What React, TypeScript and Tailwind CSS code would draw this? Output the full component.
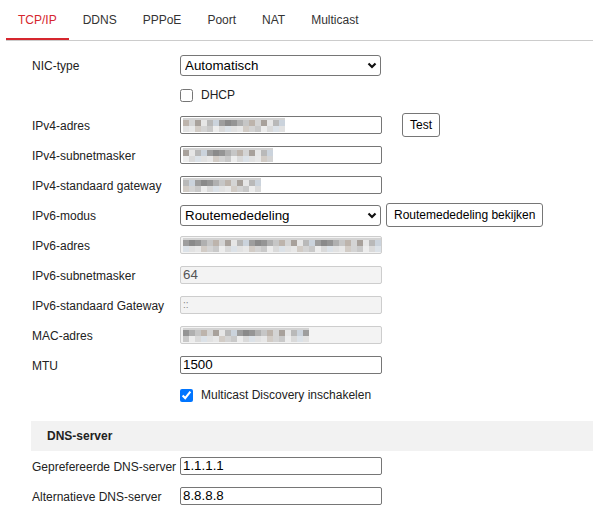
import { useState } from 'react'

const tabs = ['TCP/IP', 'DDNS', 'PPPoE', 'Poort', 'NAT', 'Multicast']

// pixel-blokjes voor de onherkenbaar gemaakte adressen
const donker = ['bg-[#b0b0b0]', 'bg-[#9e9e9e]', 'bg-[#e6e6e6]', 'bg-[#bdb4ac]', 'bg-[#959595]', 'bg-[#cbd3dc]', 'bg-[#a8a19b]', 'bg-[#c6c6c6]', 'bg-[#8a8a8a]', 'bg-[#b9b9b9]', 'bg-[#d4d4d4]']
const licht = ['bg-[#d4d4d4]', 'bg-[#e2e2e2]', 'bg-[#ededed]', 'bg-[#d2ccc6]', 'bg-[#dce2e8]', 'bg-[#c9c9c9]', 'bg-[#e8e8e8]', 'bg-[#dadada]']

function Mosaic({ width, seed }: { width: number; seed: number }) {
  const n = Math.round(width / 6)
  const cols = Array.from({ length: n }, (_, i) => i)
  return (
    <div className="flex flex-col">
      <div className="h-[2px] bg-[#d3d3d3]" style={{ width: n * 6 }} />
      <div className="flex">
        {cols.map((i) => (
          <div key={i} className={`w-[6px] h-[6px] ${donker[(i * 7 + seed * 3) % donker.length]}`} />
        ))}
      </div>
      <div className="flex">
        {cols.map((i) => (
          <div key={i} className={`w-[6px] h-[6px] ${licht[(i * 5 + seed) % licht.length]}`} />
        ))}
      </div>
    </div>
  )
}

function Chevron() {
  return (
    <svg width="10" height="7" viewBox="0 0 10 7" className="pointer-events-none absolute right-[4px] top-[7px]">
      <path d="M1.5 1.5 5 5l3.5-3.5" fill="none" stroke="#111" strokeWidth="2.2" />
    </svg>
  )
}

function Keuze({ waarde }: { waarde: string }) {
  return (
    <div className="relative w-[201px] h-[21px]">
      <select
        defaultValue={waarde}
        className="block appearance-none w-full h-[21px] border border-[#767676] rounded-[3px] bg-white pl-[4px] py-0 leading-[17px] text-[13.33px] text-black outline-none"
      >
        <option>{waarde}</option>
      </select>
      <Chevron />
    </div>
  )
}

function Veld({ waarde, mosaic, seed = 0, uit = false }: { waarde?: string; mosaic?: number; seed?: number; uit?: boolean }) {
  const stijl = uit
    ? 'border-[#cdcdcd] bg-[#f3f3f3] text-[#555]'
    : 'border-[#767676] bg-white text-black'
  return (
    <div className={`w-[202px] h-[18px] border rounded-[2px] flex items-center pl-[2px] text-[13.33px] leading-[16px] ${stijl}`}>
      {mosaic ? <Mosaic width={mosaic} seed={seed} /> : <span className={waarde === '::' ? 'text-[10px] text-[#888]' : ''}>{waarde}</span>}
    </div>
  )
}

function Knop({ children, className = '' }: { children: string; className?: string }) {
  return (
    <button className={`h-[24px] px-[7px] border border-[#767676] rounded-[3px] bg-white text-[12px] text-black ${className}`}>
      {children}
    </button>
  )
}

function Vinkje({ label, aan }: { label: string; aan: boolean }) {
  const [v, setV] = useState(aan)
  return (
    <label className="flex items-center gap-[8px] text-[12px] text-[#222]">
      <input type="checkbox" checked={v} onChange={() => setV(!v)} className="w-[13px] h-[13px] m-0 accent-[#0075ff]" />
      {label}
    </label>
  )
}

function Rij({ label, children }: { label?: string; children: React.ReactNode }) {
  return (
    <div className="flex items-center h-[30px]">
      <div className="w-[149px] pl-[1px] pt-[1px] text-[12px] text-[#222]">{label}</div>
      <div className="flex items-center">{children}</div>
    </div>
  )
}

export default function App() {
  const [actief, setActief] = useState(0)

  return (
    <div className="w-[593px] h-[518px] bg-white font-['Liberation_Sans',Arial,sans-serif] overflow-hidden">
      {/* Tabs */}
      <div className="ml-[6px] flex gap-[2px] border-b border-[#cccccc]">
        {tabs.map((t, i) => (
          <button
            key={t}
            onClick={() => setActief(i)}
            className={`h-[40px] px-[12px] pt-[2px] border-b-2 text-[12px] ${
              i === actief ? 'border-[#d6262e] text-[#d6262e]' : 'border-transparent text-[#333]'
            }`}
          >
            {t}
          </button>
        ))}
      </div>

      {/* Formulier */}
      <div className="ml-[31px] mt-[9px]">
        <Rij label="NIC-type"><Keuze waarde="Automatisch" /></Rij>
        <Rij><Vinkje label="DHCP" aan={false} /></Rij>
        <Rij label="IPv4-adres">
          <Veld mosaic={104} seed={1} />
          <Knop className="ml-[20px]">Test</Knop>
        </Rij>
        <Rij label="IPv4-subnetmasker"><Veld mosaic={92} seed={2} /></Rij>
        <Rij label="IPv4-standaard gateway"><Veld mosaic={80} seed={3} /></Rij>
        <Rij label="IPv6-modus">
          <Keuze waarde="Routemededeling" />
          <Knop className="ml-[5px]">Routemededeling bekijken</Knop>
        </Rij>
        <Rij label="IPv6-adres"><Veld mosaic={200} seed={4} uit /></Rij>
        <Rij label="IPv6-subnetmasker"><Veld waarde="64" uit /></Rij>
        <Rij label="IPv6-standaard Gateway"><Veld waarde="::" uit /></Rij>
        <Rij label="MAC-adres"><Veld mosaic={125} seed={5} uit /></Rij>
        <Rij label="MTU"><Veld waarde="1500" /></Rij>
        <Rij><Vinkje label="Multicast Discovery inschakelen" aan /></Rij>

        {/* DNS */}
        <div className="mt-[11px] h-[30px] bg-[#f2f2f2] flex items-center pl-[16px] text-[12px] font-bold text-[#222]">
          DNS-server
        </div>
        <Rij label="Geprefereerde DNS-server"><Veld waarde="1.1.1.1" /></Rij>
        <Rij label="Alternatieve DNS-server"><Veld waarde="8.8.8.8" /></Rij>
      </div>
    </div>
  )
}
